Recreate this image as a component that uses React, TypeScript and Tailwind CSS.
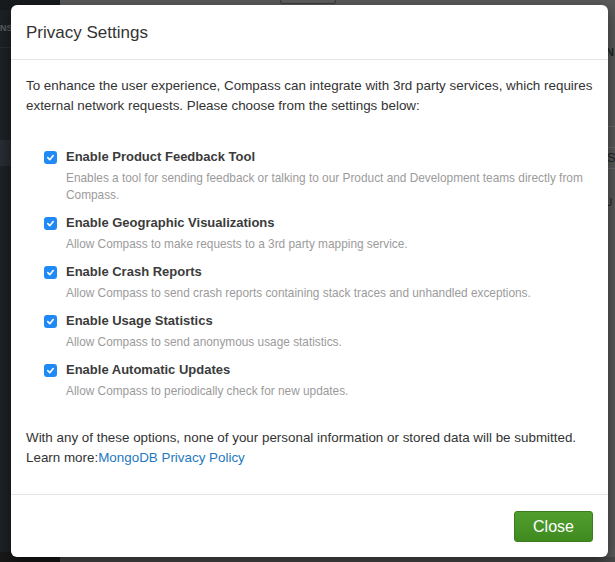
import { useState } from "react";

type Option = {
  id: string;
  title: string;
  desc: string;
};

const OPTIONS: Option[] = [
  {
    id: "feedback",
    title: "Enable Product Feedback Tool",
    desc: "Enables a tool for sending feedback or talking to our Product and Development teams directly from Compass.",
  },
  {
    id: "geo",
    title: "Enable Geographic Visualizations",
    desc: "Allow Compass to make requests to a 3rd party mapping service.",
  },
  {
    id: "crash",
    title: "Enable Crash Reports",
    desc: "Allow Compass to send crash reports containing stack traces and unhandled exceptions.",
  },
  {
    id: "usage",
    title: "Enable Usage Statistics",
    desc: "Allow Compass to send anonymous usage statistics.",
  },
  {
    id: "updates",
    title: "Enable Automatic Updates",
    desc: "Allow Compass to periodically check for new updates.",
  },
];

function Checkbox({ checked, onChange }: { checked: boolean; onChange: () => void }) {
  return (
    <button
      type="button"
      onClick={onChange}
      className={`mt-[4px] flex h-[13px] w-[13px] shrink-0 items-center justify-center rounded-[3px] ${
        checked ? "bg-[#1f8af5]" : "border border-[#aaa] bg-white"
      }`}
    >
      {checked && (
        <svg width="9" height="9" viewBox="0 0 10 10" fill="none">
          <path d="M2 5.2 L4.2 7.4 L8 2.8" stroke="white" strokeWidth="1.8" strokeLinecap="round" strokeLinejoin="round" />
        </svg>
      )}
    </button>
  );
}

export default function App() {
  const [enabled, setEnabled] = useState<Record<string, boolean>>({
    feedback: true,
    geo: true,
    crash: true,
    usage: true,
    updates: true,
  });

  function toggle(id: string) {
    setEnabled((e) => ({ ...e, [id]: !e[id] }));
  }

  return (
    <div className="relative h-[562px] w-[615px] overflow-hidden bg-[#5a5a5a] font-['Liberation_Sans',Arial,sans-serif]">
      {/* app behind the backdrop */}
      <div className="flex h-full">
        <div className="flex w-[60px] flex-col bg-[#1d2125]">
          <div className="h-[10px] bg-[#181b1e]" />
          <div className="flex h-[38px] items-center border-b border-[#2a2f34] text-[9px] font-bold text-[#5d6166]">
            <span>NS</span>
          </div>
          <div className="h-[92px]" />
          <div className="h-[26px] bg-[#282d33]" />
          <div className="flex-1" />
          <div className="h-[10px] bg-[#181818]" />
        </div>
        <div className="flex flex-1 flex-col">
          <div className="flex h-[4px] justify-center">
            <div className="ml-[-60px] h-[4px] w-[56px] rounded-b-[3px] border border-t-0 border-[#3e3e3e] bg-[#5e5e5e]" />
          </div>
          <div className="flex flex-1 justify-end">
            <div className="flex w-[12px] flex-col text-[11px] font-bold text-[#222]">
              <div className="mt-[40px] h-[14px] pl-[3px]">N</div>
              <div className="mt-[68px] h-[1px] bg-[#6a6a6a]" />
              <div className="mt-[20px] border-y border-[#6a6a6a] pl-[4px] text-[13px] font-normal">S</div>
              <div className="mt-[26px] pl-[2px] text-[10px] font-normal">U</div>
            </div>
          </div>
          <div className="h-[5px] bg-[#4a4a4a]" />
        </div>
      </div>

      {/* modal */}
      <div className="absolute left-[11px] top-[5px] w-[597px] rounded-[6px] bg-white shadow-[0_5px_15px_rgba(0,0,0,0.5)]">
        <div className="border-b border-[#e5e5e5] px-[15px] pb-[14px] pt-[16px]">
          <h4 className="text-[17px] leading-[24px] text-[#333]">Privacy Settings</h4>
        </div>

        <div className="px-[15px] pt-[16px] text-[13.4px] leading-[20px] text-[#333]">
          <p>
            To enhance the user experience, Compass can integrate with 3rd party services, which requires
            external network requests. Please choose from the settings below:
          </p>

          <div className="mt-[31px] flex flex-col gap-[9px] pl-[18px]">
            {OPTIONS.map((o) => (
              <div key={o.id} className="flex gap-[9px]">
                <Checkbox checked={enabled[o.id]} onChange={() => toggle(o.id)} />
                <div>
                  <div className="text-[13px] font-bold leading-[20px] text-[#3b3b3b]">{o.title}</div>
                  <div className="mt-[3px] text-[11.85px] leading-[17px] text-[#9b9b9b]">{o.desc}</div>
                </div>
              </div>
            ))}
          </div>

          <p className="mb-[10px] mt-[28px] pb-[16px]">
            With any of these options, none of your personal information or stored data will be submitted.
            <br />
            Learn more:
            <a href="#" className="text-[#2479c2]">
              MongoDB Privacy Policy
            </a>
          </p>
        </div>

        <div className="flex justify-end border-t border-[#e5e5e5] px-[15px] pb-[15px] pt-[16px]">
          <button className="h-[31px] w-[79px] rounded-[3px] border border-[#3b7d1d] bg-gradient-to-b from-[#519e2e] to-[#3f8a1f] text-[16px] text-white">
            Close
          </button>
        </div>
      </div>
    </div>
  );
}
